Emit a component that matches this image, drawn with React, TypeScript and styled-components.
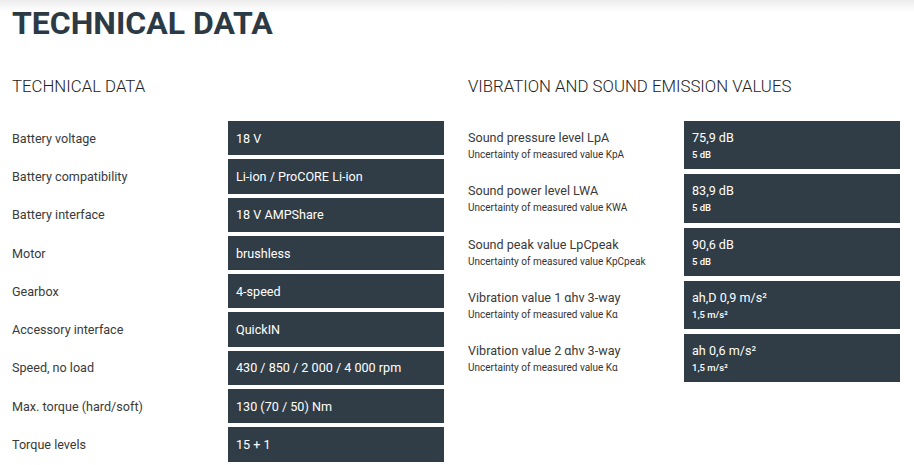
import styled, { createGlobalStyle } from "styled-components";

const GlobalStyle = createGlobalStyle`
  body {
    margin: 0;
    font-family: Roboto, "Liberation Sans", Arial, sans-serif;
    background: linear-gradient(#ececec 0px, #ffffff 12px) no-repeat, #ffffff;
    color: #333;
  }
`;

const Page = styled.main`
  padding: 0 12px;
  width: 888px;
`;

const Title = styled.h1`
  margin: 0;
  padding-top: 4px;
  font-size: 32px;
  line-height: 38px;
  font-weight: 700;
  color: #2c3a45;
`;

const Columns = styled.div`
  display: grid;
  grid-template-columns: 432px 432px;
  column-gap: 24px;
  margin-top: 34px;
`;

const SectionTitle = styled.h2`
  margin: 0 0 25px;
  font-size: 16.8px;
  line-height: 20px;
  font-weight: 300;
  color: #222;
`;

const Table = styled.div<{ $gap: number }>`
  display: flex;
  flex-direction: column;
  gap: ${(p) => p.$gap}px;
`;

const Row = styled.div<{ $height: number }>`
  display: grid;
  grid-template-columns: 216px 216px;
  height: ${(p) => p.$height}px;
`;

const Label = styled.div`
  display: flex;
  flex-direction: column;
  justify-content: center;
  font-size: 12.6px;
  color: #3a3a3a;
`;

const SubLabel = styled.span`
  font-size: 10px;
  margin-top: 4px;
  color: #333;
`;

const Value = styled.div`
  background: #313d46;
  color: #fff;
  display: flex;
  flex-direction: column;
  justify-content: center;
  padding: 0 8px;
  font-size: 12.6px;
`;

const SubValue = styled.span`
  font-size: 9.5px;
  font-weight: 500;
  margin-top: 4px;
`;

const tech = [
  ["Battery voltage", "18 V"],
  ["Battery compatibility", "Li-ion / ProCORE Li-ion"],
  ["Battery interface", "18 V AMPShare"],
  ["Motor", "brushless"],
  ["Gearbox", "4-speed"],
  ["Accessory interface", "QuickIN"],
  ["Speed, no load", "430 / 850 / 2 000 / 4 000 rpm"],
  ["Max. torque (hard/soft)", "130 (70 / 50) Nm"],
  ["Torque levels", "15 + 1"],
];

const emission = [
  { label: "Sound pressure level LpA", sub: "Uncertainty of measured value KpA", value: "75,9 dB", unc: "5 dB" },
  { label: "Sound power level LWA", sub: "Uncertainty of measured value KWA", value: "83,9 dB", unc: "5 dB" },
  { label: "Sound peak value LpCpeak", sub: "Uncertainty of measured value KpCpeak", value: "90,6 dB", unc: "5 dB" },
  { label: "Vibration value 1 αhv 3-way", sub: "Uncertainty of measured value Kα", value: "ah,D 0,9 m/s²", unc: "1,5 m/s²" },
  { label: "Vibration value 2 αhv 3-way", sub: "Uncertainty of measured value Kα", value: "ah 0,6 m/s²", unc: "1,5 m/s²" },
];

const App = () => (
  <>
    <GlobalStyle />
    <Page>
      <Title>TECHNICAL DATA</Title>
      <Columns>
        <section>
          <SectionTitle>TECHNICAL DATA</SectionTitle>
          <Table $gap={4}>
            {tech.map(([label, value]) => (
              <Row key={label} $height={34.3}>
                <Label>{label}</Label>
                <Value>{value}</Value>
              </Row>
            ))}
          </Table>
        </section>
        <section>
          <SectionTitle>VIBRATION AND SOUND EMISSION VALUES</SectionTitle>
          <Table $gap={5}>
            {emission.map((e) => (
              <Row key={e.label} $height={48.3}>
                <Label>
                  {e.label}
                  <SubLabel>{e.sub}</SubLabel>
                </Label>
                <Value>
                  {e.value}
                  <SubValue>{e.unc}</SubValue>
                </Value>
              </Row>
            ))}
          </Table>
        </section>
      </Columns>
    </Page>
  </>
);

export default App;
